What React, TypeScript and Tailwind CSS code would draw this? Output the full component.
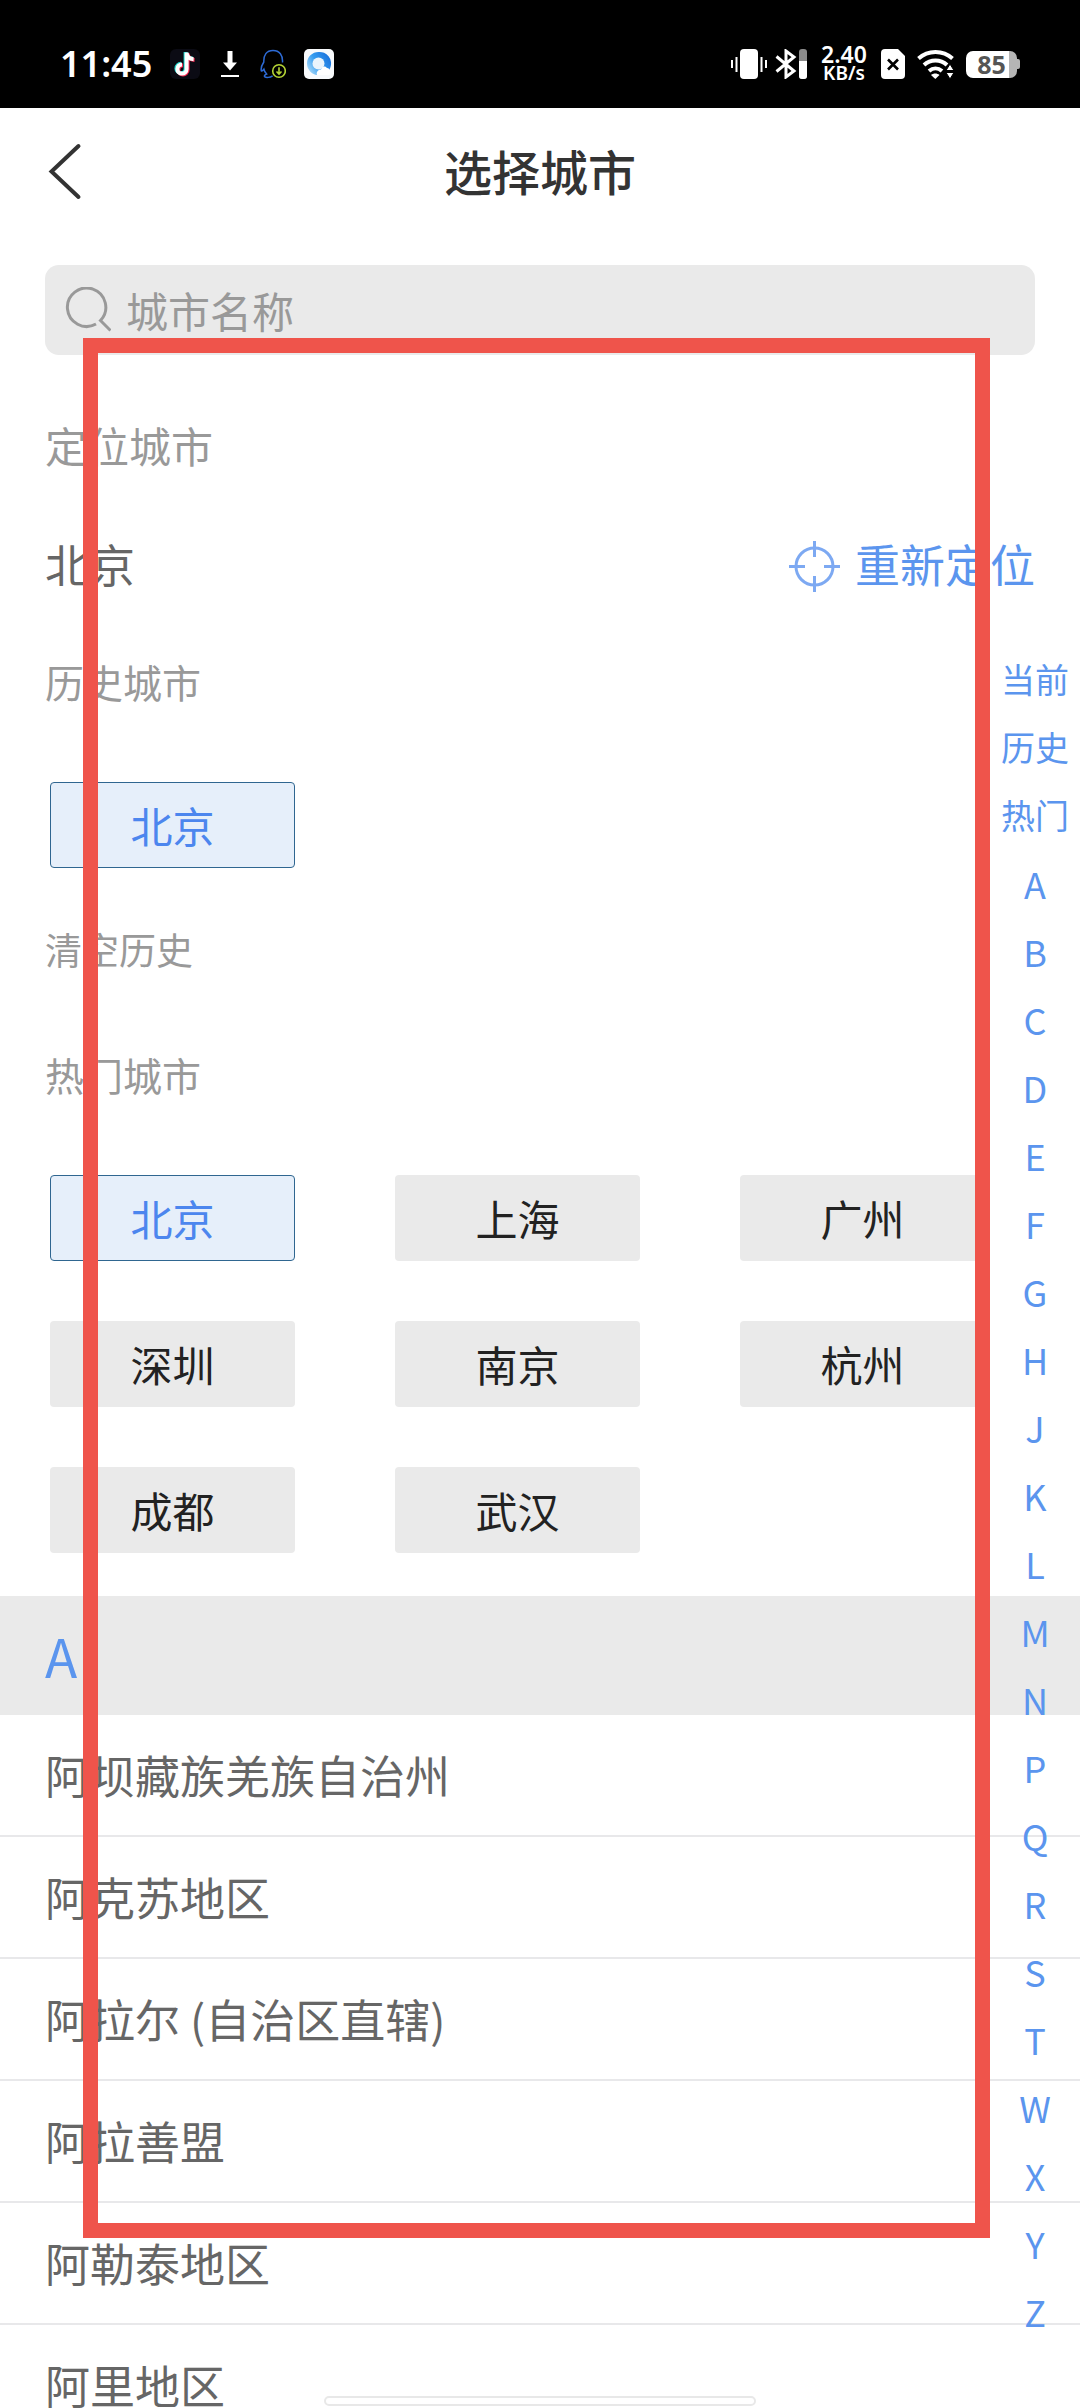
import { useState } from "react";

const hotCities = ["北京", "上海", "广州", "深圳", "南京", "杭州", "成都", "武汉"];

const cities = [
  "阿坝藏族羌族自治州",
  "阿克苏地区",
  "阿拉尔 (自治区直辖)",
  "阿拉善盟",
  "阿勒泰地区",
  "阿里地区",
];

const shortcuts = ["当前", "历史", "热门"];
const letters = "ABCDEFGHJKLMNPQRSTWXYZ".split("");

const TikTokIcon = () => (
  <svg width="30" height="30" viewBox="0 0 30 30">
    <rect width="30" height="30" rx="6" fill="#0b0b14" />
    <g fill="none" strokeWidth="4">
      <path d="M16.6 3.5V20a4.6 4.6 0 1 1-4.6-4.6M16.6 4c.5 4 3 6 7 6.2" stroke="#25d9d3" transform="translate(-1 -.6)" />
      <path d="M16.6 3.5V20a4.6 4.6 0 1 1-4.6-4.6M16.6 4c.5 4 3 6 7 6.2" stroke="#f3264f" transform="translate(1 .8)" />
      <path d="M16.6 3.5V20a4.6 4.6 0 1 1-4.6-4.6M16.6 4c.5 4 3 6 7 6.2" stroke="#fff" />
    </g>
  </svg>
);

const DownloadIcon = () => (
  <svg width="24" height="30" viewBox="0 0 24 30" fill="#fff">
    <path d="M9.5 2h5v11.5h4.5L12 21.5 5 13.5h4.5z" />
    <rect x="3" y="26" width="18" height="2" />
  </svg>
);

const QQIcon = () => (
  <svg width="26" height="30" viewBox="0 0 26 30" fill="none">
    <path
      d="M22.5 13.5C23 6 19.5 1.5 13 1.5S3.5 6 3.8 13C1.5 16.5 .8 19.5 1.3 21.8c.9 .6 1.7-.4 2.6-1.6 .5 2 1.3 3.5 2.7 4.8-1.6 .7-2.6 1.7-2 2.7 1.5 1.2 5.4 .9 8-.9"
      stroke="#2d6bd6"
      strokeWidth="1.5"
    />
    <circle cx="19" cy="22" r="6.3" fill="#000" stroke="#b4d335" strokeWidth="1.6" />
    <path d="M19 18.3v6.5M16.5 22.5 19 25l2.5-2.5" stroke="#b4d335" strokeWidth="1.6" />
  </svg>
);

const BrowserIcon = () => (
  <svg width="30" height="30" viewBox="0 0 30 30">
    <defs>
      <linearGradient id="ring" x1="1" y1="0.3" x2="0" y2="0.9">
        <stop offset="0" stopColor="#1a73dd" />
        <stop offset="0.5" stopColor="#359cf0" />
        <stop offset="1" stopColor="#b9e2fa" />
      </linearGradient>
    </defs>
    <rect width="30" height="30" rx="5" fill="#f8fafc" />
    <path d="M14.5 3a11.5 11.5 0 1 0 0 23h9l3-8A11.5 11.5 0 0 0 14.5 3z" fill="url(#ring)" />
    <circle cx="14.5" cy="14.5" r="6" fill="#eaf4fc" />
    <path d="M13 26c-1-3 1-5.5 4-5.5 1-3.5 4.5-4 6-1.5 3 0 4.5 4 2.5 7z" fill="#fff" />
  </svg>
);

const VibrateIcon = () => (
  <svg width="36" height="30" viewBox="0 0 36 30" fill="#fff">
    <rect x="9" width="18" height="30" rx="4" />
    <path d="M0 11h2v8H0zM4.5 8h2v15h-2zM29.5 8h2v15h-2zM34 11h2v8h-2z" />
  </svg>
);

const BluetoothIcon = () => (
  <svg width="32" height="30" viewBox="0 0 32 30">
    <path d="M1.5 7.5 19 22l-8 6v-26L19 8 1.5 22.5" fill="none" stroke="#fff" strokeWidth="3" />
    <rect x="24" width="8" height="30" rx="3" fill="#8a8a8a" />
    <path d="M24 12h8v15a3 3 0 0 1-3 3h-2a3 3 0 0 1-3-3z" fill="#fff" />
  </svg>
);

const SimIcon = () => (
  <svg width="24" height="30" viewBox="0 0 24 30">
    <path d="M4 0h13l7 7v19a4 4 0 0 1-4 4H4a4 4 0 0 1-4-4V4a4 4 0 0 1 4-4z" fill="#fff" />
    <path d="m7 10.5 10 10M17 10.5l-10 10" stroke="#000" strokeWidth="2.6" />
  </svg>
);

const WifiIcon = () => (
  <svg width="37" height="30" viewBox="0 0 37 30" fill="none" stroke="#fff" strokeWidth="4">
    <path d="M1.5 9.5C11 .8 26 .8 35.5 9.5" />
    <path d="M7 16c6.5-6 16.5-6 23 0" />
    <path d="M12 22c4-3.5 9-3.5 13 0" />
    <path d="M14 26c2.5-2 6-2 8.5 0L18.3 30z" fill="#fff" stroke="none" />
    <path d="M33 15l4 6.5h-8zM33 30l4-6.5h-8z" fill="#fff" stroke="#000" strokeWidth="1" />
  </svg>
);

const SearchIcon = () => (
  <svg width="46" height="46" viewBox="0 0 46 46" fill="none" stroke="#999" strokeWidth="3">
    <path d="M31 37A19.2 19.2 0 1 1 35.5 33.5L45.5 43.5" />
  </svg>
);

const LocateIcon = () => (
  <svg width="51" height="51" viewBox="0 0 51 51" fill="none" stroke="#7da9f2" strokeWidth="3">
    <circle cx="25.5" cy="25.5" r="18.5" />
    <path d="M25.5 0v16M25.5 35v16M0 25.5h16M35 25.5h16" />
  </svg>
);

function StatusBar() {
  return (
    <div className="flex h-[108px] items-center justify-between bg-black px-[60px] pt-5 text-white">
      <div className="flex items-center gap-[18px]">
        <span className="w-[92px] text-[36px] leading-[40px] font-semibold">11:45</span>
        <TikTokIcon />
        <DownloadIcon />
        <QQIcon />
        <BrowserIcon />
      </div>
      <div className="flex items-center gap-3">
        <div className="flex items-center gap-2">
          <VibrateIcon />
          <BluetoothIcon />
        </div>
        <div className="flex w-[50px] flex-col items-center font-semibold">
          <span className="text-[23px] leading-[19px]">2.40</span>
          <span className="text-[19px] leading-[19px]">KB/s</span>
        </div>
        <SimIcon />
        <WifiIcon />
        <div className="flex items-center">
          <div className="flex h-[27px] w-[51px] items-center justify-center rounded-[7px] bg-linear-to-r from-white from-85% to-[#b5b5b5] to-85% text-[25px] leading-[27px] font-bold text-[#555]">
            85
          </div>
          <div className="h-[10px] w-[3px] rounded-r-[2px] bg-[#b5b5b5]" />
        </div>
      </div>
    </div>
  );
}

function CityChip({ name, active, onClick }: { name: string; active: boolean; onClick: () => void }) {
  return (
    <div className="px-[50px]">
      <button
        type="button"
        onClick={onClick}
        className={
          active
            ? "h-[86px] w-full rounded border border-[#2f6690] bg-[#e6effa] font-['Noto_Sans_CJK_SC',sans-serif] text-[42px] leading-[60px] text-[#4c86ee]"
            : "h-[86px] w-full rounded bg-[#eaeaea] font-['Noto_Sans_CJK_SC',sans-serif] text-[42px] leading-[60px] text-[#222]"
        }
      >
        {name}
      </button>
    </div>
  );
}

export default function App() {
  const [city, setCity] = useState("北京");
  const [keyword, setKeyword] = useState("");

  return (
    <div className="relative h-screen overflow-hidden bg-white font-['Noto_Sans','Noto_Sans_CJK_SC',sans-serif]">
      <StatusBar />

      <header className="grid h-[130px] grid-cols-[1fr_auto_1fr] items-center px-[45px]">
        <button type="button" aria-label="返回" className="justify-self-start">
          <svg width="40" height="60" viewBox="0 0 40 60" fill="none" stroke="#333" strokeWidth="4" strokeLinecap="round">
            <path d="M33.5 3 6.5 28.5l27 25.5" />
          </svg>
        </button>
        <h1 className="text-[48px] leading-[60px] font-medium text-[#333]">选择城市</h1>
      </header>

      <label className="mx-[45px] mt-[27px] flex h-[90px] items-center gap-[15px] rounded-[14px] bg-[#eaeaea] px-5">
        <SearchIcon />
        <input
          type="text"
          aria-label="城市名称"
          placeholder="城市名称"
          value={keyword}
          onChange={(e) => setKeyword(e.target.value)}
          className="h-[60px] flex-1 bg-transparent font-['Noto_Sans_CJK_SC',sans-serif] text-[42px] leading-[60px] text-[#333] outline-none placeholder:text-[#999]"
        />
      </label>

      <section className="px-[45px]">
        <h2 className="mt-[62px] text-[42px] leading-[60px] text-[#999]">定位城市</h2>
        <div className="mt-[54px] flex h-[70px] items-center justify-between text-[45px] leading-[60px]">
          <span className="text-[#666]">{city}</span>
          <button type="button" className="flex items-center gap-[15px] text-[#5b95ee]">
            <LocateIcon />
            重新定位
          </button>
        </div>
      </section>

      <section>
        <h2 className="mt-[52px] px-[45px] text-[39px] leading-[60px] text-[#999]">历史城市</h2>
        <div className="mt-[69px] mr-[45px] grid grid-cols-3">
          <CityChip name="北京" active={city === "北京"} onClick={() => setCity("北京")} />
        </div>
        <button type="button" className="mt-[53px] ml-[45px] block text-[37px] leading-[60px] text-[#999]">
          清空历史
        </button>
      </section>

      <section>
        <h2 className="mt-[65px] px-[45px] text-[39px] leading-[60px] text-[#999]">热门城市</h2>
        <div className="mt-[69px] mr-[45px] grid grid-cols-3 gap-y-[60px]">
          {hotCities.map((name) => (
            <CityChip key={name} name={name} active={city === name} onClick={() => setCity(name)} />
          ))}
        </div>
      </section>

      <section id="A" className="mt-[43px] font-['Noto_Sans_CJK_SC',sans-serif]">
        <h2 className="h-[119px] bg-[#eaeaea] px-[45px] text-[53px] leading-[119px] text-[#5b95ee]">A</h2>
        <ul>
          {cities.map((name) => (
            <li key={name} className="border-b-2 border-[#e8e8ea]">
              <button
                type="button"
                onClick={() => setCity(name)}
                className="h-[120px] w-full px-[45px] text-left text-[45px] leading-[60px] text-[#666]"
              >
                {name}
              </button>
            </li>
          ))}
        </ul>
      </section>

      {/* letter index over the list */}
      <nav className="absolute top-[645px] right-0 flex w-[90px] flex-col text-center font-['Noto_Sans_CJK_SC',sans-serif] leading-[68px] text-[#5b95ee]">
        {shortcuts.map((s) => (
          <a key={s} href="#" className="text-[34px]">
            {s}
          </a>
        ))}
        {letters.map((l) => (
          <a key={l} href={`#${l}`} className="text-[36px]">
            {l}
          </a>
        ))}
      </nav>

      {/* highlight frame */}
      <div className="pointer-events-none absolute top-[338px] right-[90px] left-[83px] h-[1900px] border-[15px] border-[#ef544b]" />

      {/* home indicator */}
      <div className="pointer-events-none absolute inset-x-0 bottom-[2px] flex justify-center">
        <div className="h-[10px] w-2/5 rounded-full border-2 border-[#e8e8e8] bg-white" />
      </div>
    </div>
  );
}
